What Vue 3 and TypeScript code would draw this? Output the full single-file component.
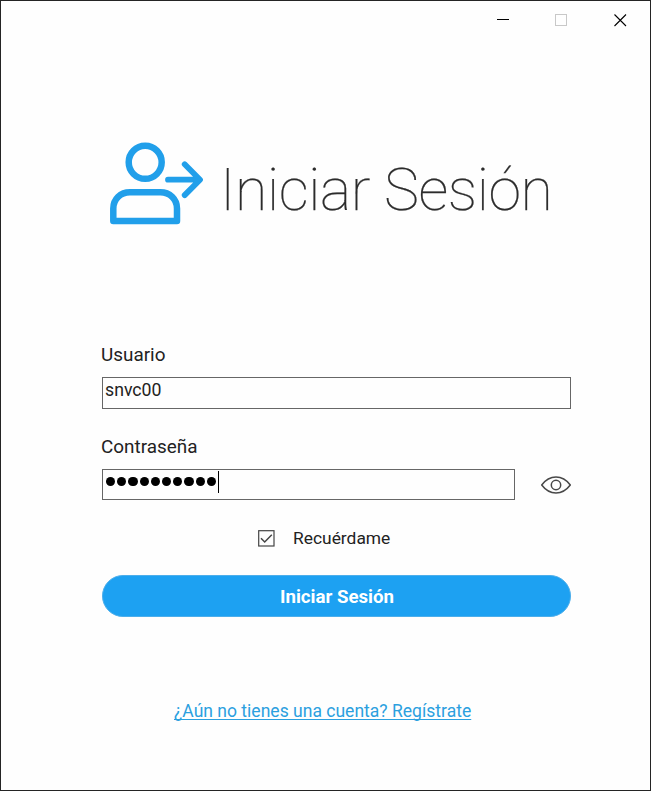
<script setup lang="ts">
import { ref } from 'vue'

const username = ref('snvc00')
const passwordLength = ref(10)
const remember = ref(true)

function toggleRemember() {
  remember.value = !remember.value
}
</script>

<template>
  <div class="window">
    <header class="titlebar">
      <svg width="13" height="13" viewBox="0 0 13 13"><path d="M0 5.5h12" stroke="#000" /></svg>
      <svg width="13" height="13" viewBox="0 0 13 13"><rect x=".5" y=".5" width="11" height="11" fill="none" stroke="#c8c8c8" /></svg>
      <svg class="close" width="13" height="13" viewBox="0 0 13 13"><path d="M.5 .5l11.500 11.500M12 .5l-11.500 11.500" stroke="#000" stroke-width="1.1" /></svg>
    </header>

    <div class="hero">
      <svg class="logo" width="96" height="84" viewBox="0 0 96 84" fill="none" stroke="#219fea" stroke-width="6.5" stroke-linejoin="round" stroke-linecap="round">
        <circle cx="36.2" cy="20.3" r="16.5" />
        <path d="M4.3 79V66.5C4.3 57 11.5 50.3 21 50.3H51.300C60.800 50.3 68 57 68 66.5V79Z" />
        <path d="M59 37.7H89.5M75.700 22.300L91 37.700L75.700 53.100" stroke-width="5.8" />
      </svg>
      <h1>Iniciar Sesión</h1>
    </div>

    <main class="form">
      <label class="label user-label">Usuario</label>
      <div class="field"><span class="value">{{ username }}</span></div>

      <label class="label pass-label">Contraseña</label>
      <div class="pass-row">
        <div class="field password">
          <i v-for="n in passwordLength" :key="n" class="dot"></i>
          <i class="caret"></i>
        </div>
        <svg class="eye" width="32" height="20" viewBox="0 0 32 20" fill="none" stroke="#484848" stroke-width="1.5" stroke-linejoin="round">
          <path d="M1.700 10C9.700-.6 22.300-.6 30.300 10C22.300 20.600 9.700 20.600 1.700 10Z" />
          <circle cx="16" cy="10" r="4.700" />
        </svg>
      </div>

      <div class="remember" @click="toggleRemember">
        <svg width="17" height="17" viewBox="0 0 17 17" fill="none" stroke="#444">
          <rect x=".7" y=".7" width="15.300" height="15.300" stroke-width="1.2" />
          <path v-if="remember" d="M3 8.300L6.700 12L13.800 4.800" stroke-width="1.500" />
        </svg>
        <span>Recuérdame</span>
      </div>

      <button class="submit" type="button">Iniciar Sesión</button>
    </main>

    <a class="register">¿Aún no tienes una cuenta? Regístrate</a>
  </div>
</template>

<style>
body {
  margin: 0;
  background: #fff;
}
</style>

<style scoped>
.window {
  box-sizing: border-box;
  width: 651px;
  height: 791px;
  border: 1px solid #242424;
  background: #fefefe;
  font-family: Roboto, 'Liberation Sans', sans-serif;
  color: #222;
  display: flex;
  flex-direction: column;
  overflow: hidden;
}
svg {
  display: block;
  flex: none;
}
.titlebar {
  display: flex;
  justify-content: flex-end;
  gap: 45px;
  padding: 13px 23px 0 0;
  height: 28px;
}
.close {
  margin-left: 1px;
}
.hero {
  display: flex;
  height: 84px;
  margin: 100px 0 0 108px;
}
h1 {
  margin: 13px 0 0 15px;
  font-size: 59px;
  line-height: 70px;
  font-weight: 100;
  letter-spacing: -0.38px;
  white-space: nowrap;
  color: #2c2c2c;
  -webkit-text-stroke: 0.25px #2c2c2c;
}
.form {
  display: flex;
  flex-direction: column;
  width: 469px;
  margin-left: 101px;
}
.label {
  font-size: 18.900px;
  line-height: 22px;
  margin-left: -1px;
}
.user-label {
  margin-top: 118px;
}
.field {
  box-sizing: border-box;
  height: 32px;
  border: 1px solid #666;
  margin-top: 11px;
  padding: 1px 2px 0;
  font-size: 17.700px;
  line-height: 22px;
}
.pass-label {
  margin-top: 27px;
}
.pass-row {
  display: flex;
  align-items: center;
  margin-top: 11px;
}
.password {
  display: flex;
  flex: none;
  width: 413px;
  height: 31px;
  margin: 0;
  padding: 1px 3px 0;
}
.dot {
  width: 9.200px;
  height: 9.200px;
  border-radius: 50%;
  background: #000;
  margin: 6px 2px 0 0;
}
.caret {
  width: 1px;
  height: 22px;
  background: #000;
}
.eye {
  margin-left: 25px;
}
.remember {
  display: flex;
  align-items: center;
  height: 22px;
  margin: 27px 0 0 156px;
  gap: 18px;
  font-size: 17.400px;
}
.submit {
  height: 42px;
  border: 1px solid #4caeeb;
  border-radius: 21px;
  background: #1da1f2;
  margin-top: 26px;
  padding: 2px 0 0 1px;
  color: #fff;
  font-family: inherit;
  font-size: 18.670px;
  font-weight: 700;
}
.register {
  align-self: flex-start;
  margin: 83px 0 0 173px;
  font-size: 17.550px;
  line-height: 22px;
  color: #2ba0df;
  text-decoration: underline;
  text-decoration-thickness: 1px;
  text-underline-offset: 2px;
  text-decoration-skip-ink: none;
  white-space: nowrap;
}
</style>
